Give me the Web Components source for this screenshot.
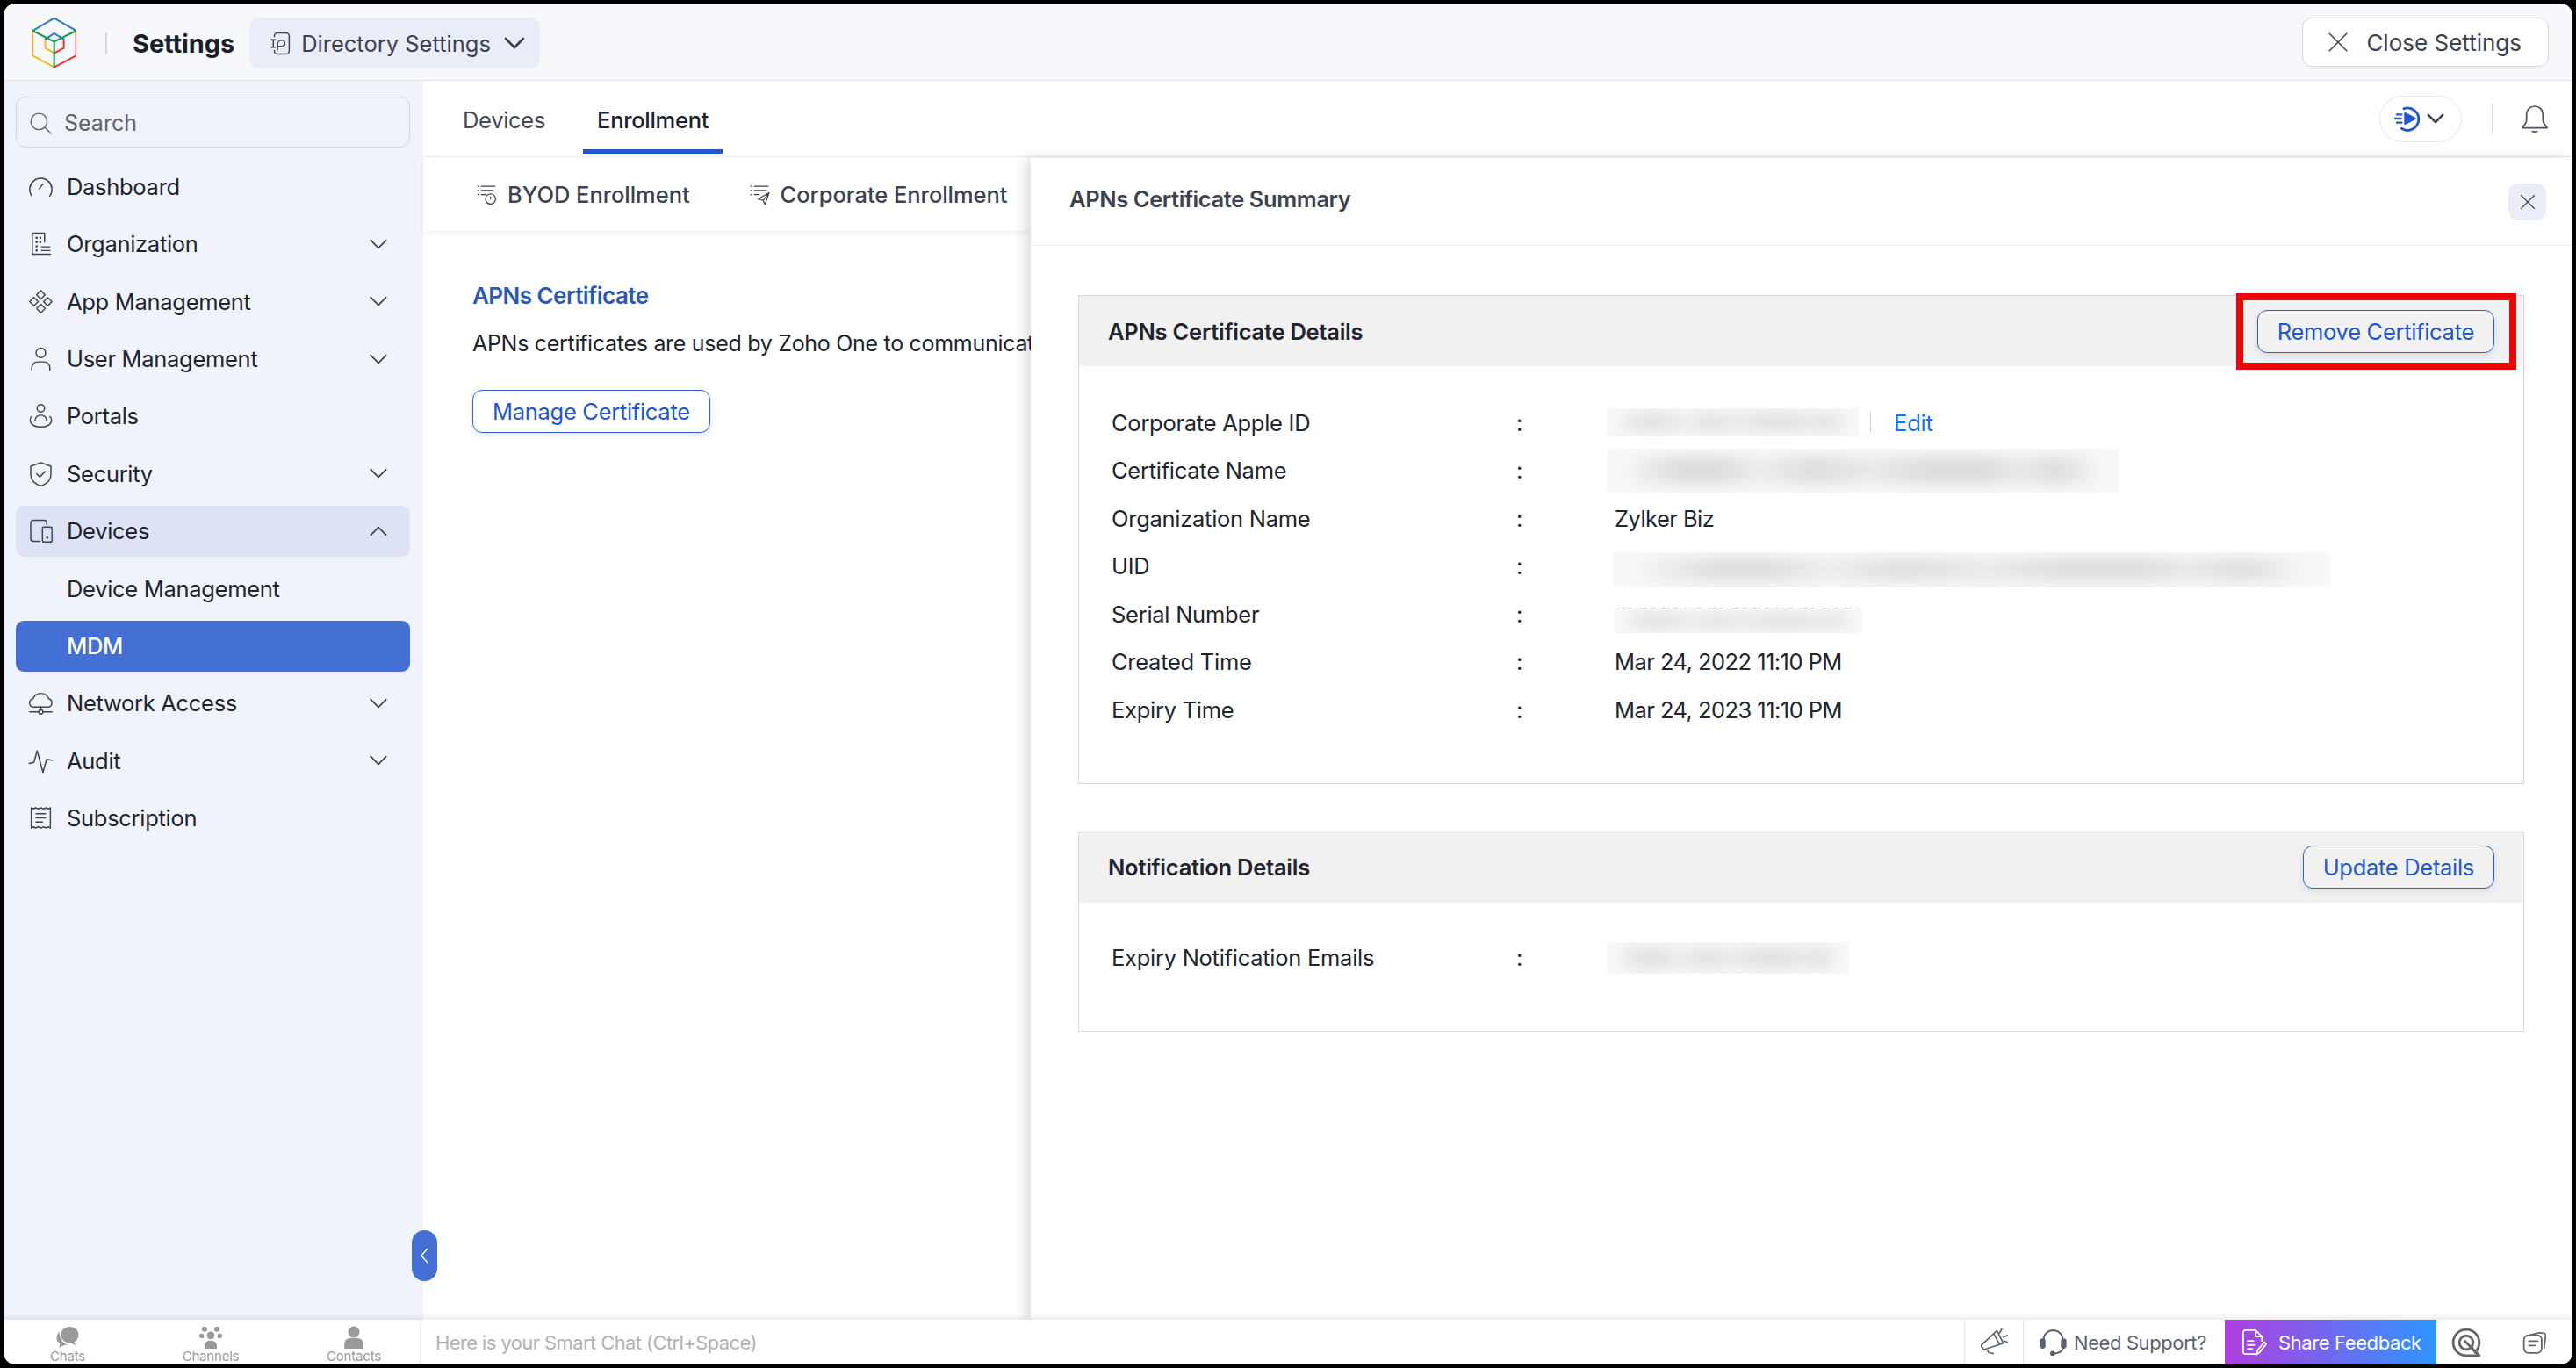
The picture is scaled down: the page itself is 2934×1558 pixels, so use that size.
<!DOCTYPE html>
<html>
<head>
<meta charset="utf-8">
<title>APNs Certificate Summary</title>
<style>
    html, body { margin: 0; height: 100%; background: #000; }
    body { padding: 4px; box-sizing: border-box; font-family: Inter, "Noto Sans", sans-serif; color: #20242e; }
</style>
</head>
<body>

<zs-app>
    <zs-topbar slot="top"></zs-topbar>
    <zs-sidebar slot="side">
        <zs-nav icon="dash">Dashboard</zs-nav>
        <zs-nav icon="org" arrow="down">Organization</zs-nav>
        <zs-nav icon="apps" arrow="down">App Management</zs-nav>
        <zs-nav icon="user" arrow="down">User Management</zs-nav>
        <zs-nav icon="portal">Portals</zs-nav>
        <zs-nav icon="shield" arrow="down">Security</zs-nav>
        <zs-nav icon="devices" arrow="up" state="open">Devices</zs-nav>
        <zs-nav>Device Management</zs-nav>
        <zs-nav state="active">MDM</zs-nav>
        <zs-nav icon="cloud" arrow="down">Network Access</zs-nav>
        <zs-nav icon="pulse" arrow="down">Audit</zs-nav>
        <zs-nav icon="receipt">Subscription</zs-nav>
    </zs-sidebar>
    <zs-main slot="main">
        <zs-panel>
            <zs-card heading="APNs Certificate Details">
                <zs-callout slot="action"><zs-btn>Remove Certificate</zs-btn></zs-callout>
                <zs-row label="Corporate Apple ID"><zs-blur w="287" h="32"></zs-blur><zs-edit></zs-edit></zs-row>
                <zs-row label="Certificate Name"><zs-blur w="583" h="50" tone="b"></zs-blur></zs-row>
                <zs-row label="Organization Name">Zylker Biz</zs-row>
                <zs-row label="UID"><zs-blur w="818" h="40" tone="b" shift="6" drop="4"></zs-blur></zs-row>
                <zs-row label="Serial Number"><zs-blur w="282" h="28" shift="8" drop="8" peek></zs-blur></zs-row>
                <zs-row label="Created Time">Mar 24, 2022 11:10 PM</zs-row>
                <zs-row label="Expiry Time">Mar 24, 2023 11:10 PM</zs-row>
            </zs-card>
            <zs-card heading="Notification Details" compact>
                <zs-btn slot="action">Update Details</zs-btn>
                <zs-row label="Expiry Notification Emails"><zs-blur w="275" h="36"></zs-blur></zs-row>
            </zs-card>
        </zs-panel>
    </zs-main>
    <zs-bottombar slot="bottom"></zs-bottombar>
</zs-app>

<script>
// every icon is drawn on a 24x24 box, stroke only unless the shape says otherwise
const ICONS = {
    chevdown: '<path d="M5 8.5l7 7 7-7"/>',
    chevup: '<path d="M5 15.5l7-7 7 7"/>',
    chevleft: '<path d="M15 3L7 12l8 9"/>',
    x: '<path d="M3 3l18 18M21 3L3 21"/>',
    search: '<circle cx="10.5" cy="10.5" r="8.5"/><path d="M16.8 16.8L23 23"/>',
    dash: '<path d="M3.6 21A10.5 10.5 0 1 1 20.4 21"/><path d="M10.5 14l3.5-4.5"/>',
    org: '<path d="M15.5 10.5V2H4v20h17"/><path d="M8 6.5h.01M11.5 6.5h.01M8 10.5h.01M11.5 10.5h.01M8 14.5h.01M8 18.5h.01" stroke-width="2.2"/><path d="M12.5 15h8M12.5 18.5h8"/>',
    apps: '<path d="M12 1.5l4 4-4 4-4-4zM12 14.5l4 4-4 4-4-4zM5.5 8l4 4-4 4-4-4zM18.5 8l4 4-4 4-4-4z"/>',
    user: '<circle cx="12" cy="6.5" r="4.5"/><path d="M3.5 23v-2.5a5.500 5.500 0 0 1 5.500-5.500h6a5.500 5.500 0 0 1 5.500 5.500V23"/>',
    portal: '<circle cx="12" cy="5" r="3.5"/><path d="M6.500 17v-.5a5 5 0 0 1 5-5h1a5 5 0 0 1 5 5v.5"/><path d="M3.500 13C.5 15 1 22.500 12 22.500S23.500 15 20.500 13"/>',
    shield: '<path d="M12 1.500l9.500 3.500v8c0 5-4 8.500-9.500 10.500C6.500 21.500 2.500 18 2.500 13V5z"/><path d="M8 12l3 3 5-5"/>',
    devices: '<path d="M17.500 6V4.500a2.500 2.500 0 0 0-2.500-2.500H5a2.500 2.500 0 0 0-2.500 2.500v15A2.500 2.500 0 0 0 5 22h6"/><rect x="13.500" y="8.500" width="9" height="14" rx="1.500"/><path d="M18 18.500h.01" stroke-width="2.200"/>',
    cloud: '<path d="M6 16h12.500a4 4 0 0 0 .8-7.900A7.800 7.800 0 0 0 4.700 8 4 4 0 0 0 6 16z"/><path d="M12 16v3M1.500 20.500h8M14.500 20.500h8"/><circle cx="12" cy="20.500" r="2"/>',
    pulse: '<path d="M1 14.500l4.500-1L8.500 2.500 14 23l3.500-12.500 5.500 1"/>',
    receipt: '<path d="M3 2.500l2 1 2-1 2.500 1 2.500-1 2.500 1 2.500-1 2 1 2-1v19l-2-1-2 1-2.500-1-2.500 1-2.500-1-2.500 1-2-1-2 1z"/><path d="M7.500 8h9M7.500 12h9M7.500 16h6"/>',
    book: '<path d="M7 5.500V5a3 3 0 0 1 3-3h8a3 3 0 0 1 3 3v14a3 3 0 0 1-3 3h-8a3 3 0 0 1-3-3v-.5"/><path d="M4 8.500h4M6 8.500v7M4 15.500h4"/><path d="M10 18v-5a4 4 0 0 1 4-4 3 3 0 0 1 3 3c0 2.500-3 3-7 2.500"/>',
    bell: '<path d="M12 1.500a7 7 0 0 0-7 7v5c0 3-2.500 4-3.500 6.500h21c-1-2.500-3.500-3.500-3.500-6.500v-5a7 7 0 0 0-7-7z"/><path d="M10 22.800q2 1.200 4 0"/>',
    feed: '<path d="M9 3.500A9.500 9.500 0 1 1 7 20.500" stroke-width="2.200"/><path d="M10 7.500l8.500 4.500-8.500 4.500z" fill="currentColor"/><path d="M3 8.500h4M1.500 12h5M3 15.500h4" stroke-width="1.800"/>',
    byod: '<path d="M3 3h.8M7 3h15M3 7.500h.8M7 7.500h13M3 12h.8M7 12h5"/><circle cx="17" cy="17" r="5.500"/><path d="M17 14.500V17"/>',
    corp: '<path d="M3 3h.8M7 3h15M3 7.500h.8M7 7.500h13M3 12h.8M7 12h5"/><path d="M23 10l-12 7 5.500 1.500 2 4.500zM23 10l-6.500 8.500"/>',
    horn: '<path d="M14.300 1.900L.8 14.500q-.5.8 0 1.600l1.600 2q.5.5 1.200.3L19.900 13z"/><path d="M11.500 4.600l5 9.300"/><path d="M6 19.500q1 2.500 5 2.500"/><path d="M18.600.4l-2 3.500M23.800 6l-3.900 1.500M23.400 12l-2.900-1"/>',
    headset: '<path d="M3.500 12V10a8.500 8.500 0 0 1 17 0v2"/><rect x="1" y="9.500" width="3.500" height="7.500" rx="1.700" fill="currentColor"/><rect x="19.500" y="9.500" width="3.500" height="7.500" rx="1.700" fill="currentColor"/><path d="M20.500 17c0 3-3 4.500-7 5"/><circle cx="11.500" cy="22" r="1.500" fill="currentColor"/>',
    note: '<path d="M14 1.500H5a2 2 0 0 0-2 2v17a2 2 0 0 0 2 2h10"/><path d="M14 1.500V7h5.500zM19.500 7v4"/><path d="M7 11h5M7 14.500h6M7 18h4"/><path d="M14.500 23l1-3.500 6-7.500 2 1.500-6 7.500z"/>',
    target: '<path d="M12 1.500a10.500 10.500 0 1 0 0 21h10.500l-6-6"/><path d="M22.500 12A10.500 10.500 0 0 0 12 1.500"/><path d="M22.500 12a10.500 10.500 0 0 1-3.500 7.800"/><circle cx="12" cy="12" r="5.500"/><path d="M11 11l7 7"/>',
    notes: '<path d="M5 5.500l12-3 .5 0 4 .5c1.500.3 2 1 2 2l-1.500 13"/><rect x="1.500" y="5" width="18" height="18" rx="4.500"/><path d="M6.500 11h9M6.500 15.500h6"/>',
    chat: '<path fill="currentColor" stroke="none" d="M14 1c5.500 0 9.500 3.500 9.500 8.500 0 3.500-2 6-4.500 7.500l2 4-5.500-3C9 18 5 14.500 5 9.500 5 4.500 9 1 14 1z"/><path fill="currentColor" stroke="none" d="M3.500 6C1.500 8 .5 10 .5 12.500c0 3 1.500 5 3.500 6.500L3 23l6-3c1.500.2 3 .2 4-.2C8 19 3 15 3.500 6z"/>',
    team: '<g fill="currentColor" stroke="none"><circle cx="12" cy="10" r="4"/><path d="M5.500 24v-3c0-3 2.500-5.500 6.500-5.500s6.500 2.500 6.500 5.500v3z"/><circle cx="5.500" cy="3.500" r="2.800"/><circle cx="18.500" cy="3.500" r="2.800"/><circle cx="2.500" cy="10.500" r="2.500"/><circle cx="21.500" cy="10.500" r="2.500"/></g>',
    person: '<g fill="currentColor" stroke="none"><circle cx="12" cy="6.500" r="6"/><path d="M2 24v-5c0-3.500 3-6 6-6h8c3 0 6 2.500 6 6v5z"/></g>'
};

function icon(name, size, width) {
    return `<svg width="${size}" height="${size}" viewBox="0 0 24 24" fill="none" stroke="currentColor"
        stroke-width="${width ?? 1.5}" stroke-linecap="round" stroke-linejoin="round"
        style="display:block;flex:none">${ICONS[name]}</svg>`;
}

// small base class so each element only has to hand over its markup
class ShadowElement extends HTMLElement {
    connectedCallback() {
        if (this.shadowRoot) return;
        this.attachShadow({mode: 'open'});
        this.shadowRoot.innerHTML = this.markup();
    }
}

class ZsApp extends ShadowElement {
    markup() {
        return `
        <style>
            :host {
                display: grid;
                grid-template: 88px minmax(0, 1fr) 51px / 478px minmax(0, 1fr);
                width: 2926px;
                height: 1550px;
                background: #fff;
                border-radius: 14px;
                overflow: hidden;
                font-size: 26px;
            }
            ::slotted([slot="top"]), ::slotted([slot="bottom"]) { grid-column: 1 / 3; }
        </style>
        <slot name="top"></slot>
        <slot name="side"></slot>
        <slot name="main"></slot>
        <slot name="bottom"></slot>`;
    }
}

class ZsTopbar extends ShadowElement {
    markup() {
        return `
        <style>
            :host {
                display: flex;
                align-items: center;
                box-sizing: border-box;
                height: 88px;
                padding: 3px 27px 0 33px;
                background: #f7f8fc;
                border-bottom: 1px solid #e2e3e7;
            }
            .logo { display: block; flex: none; }
            .rule { width: 2px; height: 25px; margin: 0 29px 0 33px; background: #d5d6da; }
            .name { font-size: 29px; font-weight: 700; color: #1b1f2b; letter-spacing: -.1px; }
            .picker {
                display: flex;
                align-items: center;
                height: 58px;
                box-sizing: border-box;
                width: 331px;
                margin-left: 17px;
                padding: 0 14px 0 20px;
                gap: 10px;
                background: #e9edf8;
                border-radius: 11px;
                color: #3c4250;
                font-size: 25.500px;
                white-space: nowrap;
            }
            .picker .chev { margin-left: auto; }
            .close {
                display: flex;
                align-items: center;
                gap: 19px;
                height: 56px;
                box-sizing: border-box;
                margin: 0 0 2px auto;
                padding: 0 30px 0 27px;
                background: #fff;
                border: 1px solid #d5d6da;
                border-radius: 11px;
                color: #3c4250;
                font-size: 26px;
                white-space: nowrap;
            }
        </style>
        <svg class="logo" width="50" height="58" viewBox="36 18 150 174" fill="none" stroke-width="6" stroke-linecap="round" stroke-linejoin="round">
            <path stroke="#f5b71e" d="M80 92v30l30 18M37 63v85l73 40"/>
            <path stroke="#e8312f" d="M143 92v30l-33 18M185 63v85l-75 40"/>
            <path stroke="#2a77c9" d="M80 92l30-20 33 20M37 63l73-43 75 43"/>
            <path stroke="#109c47" d="M37 63l73 37 75-37M110 100v88"/>
        </svg>
        <span class="rule"></span>
        <span class="name">Settings</span>
        <div class="picker">${icon('book', 29, 1.2)}<span>Directory Settings</span><span class="chev">${icon('chevdown', 34, 1.9)}</span></div>
        <div class="close">${icon('x', 26, 1.4)}<span>Close Settings</span></div>`;
    }
}

class ZsSidebar extends ShadowElement {
    markup() {
        return `
        <style>
            :host {
                display: flex;
                flex-direction: column;
                gap: 7.400px;
                box-sizing: border-box;
                padding: 18px 15px 0 14px;
                background: #f0f3fb;
            }
            .search {
                display: flex;
                align-items: center;
                gap: 14px;
                height: 58px;
                flex: none;
                box-sizing: border-box;
                margin-bottom: 8px;
                padding: 2px 14px 0;
                border: 1px solid #d3d6de;
                border-radius: 11px;
                color: #5d6472;
                font-size: 25px;
            }
        </style>
        <div class="search">${icon('search', 26, 1.3)}<span>Search</span></div>
        <slot></slot>`;
    }
}

class ZsNav extends ShadowElement {
    markup() {
        let name = this.getAttribute('icon');
        let arrow = this.getAttribute('arrow');
        return `
        <style>
            :host {
                display: flex;
                align-items: center;
                height: 58px;
                flex: none;
                box-sizing: border-box;
                padding: 0 21px 0 14px;
                border-radius: 9px;
                color: #20242e;
                font-size: 25.500px;
                letter-spacing: -.3px;
            }
            :host([state="open"]) { background: #dde3f4; }
            :host([state="active"]) { background: #4470d3; color: #fff; font-weight: 500; }
            .ico { width: 30px; margin-right: 14px; flex: none; color: #3d4350; }
            .arrow { margin-left: auto; color: #3d4350; }
        </style>
        <span class="ico">${name ? icon(name, 29, 1.2) : ''}</span>
        <slot></slot>
        ${arrow ? `<span class="arrow">${icon(arrow === 'up' ? 'chevup' : 'chevdown', 30, 1.4)}</span>` : ''}`;
    }
}

class ZsBtn extends ShadowElement {
    markup() {
        return `
        <style>
            :host {
                display: inline-flex;
                align-items: center;
                justify-content: center;
                box-sizing: border-box;
                height: 49px;
                padding: 0 22px;
                background: transparent;
                border: 1.500px solid #2e62cf;
                border-radius: 11px;
                box-shadow: 0 3px 7px rgba(40, 60, 110, .12);
                color: #2257cc;
                font-size: 25.500px;
                font-weight: 400;
                letter-spacing: -.3px;
                white-space: nowrap;
            }
        </style>
        <slot></slot>`;
    }
}

// red annotation frame drawn over whatever it wraps
class ZsCallout extends ShadowElement {
    markup() {
        return `
        <style>
            :host { display: inline-flex; position: relative; }
            .mark {
                position: absolute;
                inset: -19px -25px -19px -24px;
                border: 8px solid #e80808;
                pointer-events: none;
            }
        </style>
        <slot></slot>
        <span class="mark"></span>`;
    }
}

class ZsMain extends ShadowElement {
    markup() {
        return `
        <style>
            :host {
                display: flex;
                flex-direction: column;
                position: relative;
                min-width: 0;
                background: #fff;
            }
            .tabs {
                display: flex;
                align-items: flex-start;
                flex: none;
                height: 87px;
                box-sizing: border-box;
                padding-left: 29px;
                gap: 27px;
                border-bottom: 1px solid #eceded;
            }
            .tab {
                display: flex;
                align-items: center;
                height: 83px;
                box-sizing: border-box;
                padding: 10px 16px 0;
                border-bottom: 5px solid transparent;
                color: #434956;
                font-size: 25.500px;
                letter-spacing: -.3px;
            }
            .tab.on { color: #1b1f2b; font-weight: 500; border-bottom-color: #2257cc; }
            .tools { display: flex; align-items: center; margin-left: auto; height: 86px; padding-right: 27px; }
            .play {
                display: flex;
                align-items: center;
                justify-content: center;
                gap: 2px;
                width: 94px;
                height: 53px;
                box-sizing: border-box;
                border: 1px solid #e3e4e8;
                border-radius: 27px;
                color: #2257cc;
            }
            .play .chev { color: #3d4350; }
            .rule { width: 1px; height: 35px; margin: 0 32px 0 34px; background: #d5d6da; }
            .bell { color: #4b515e; }
            .subtabs {
                display: flex;
                align-items: center;
                flex: none;
                height: 84px;
                box-sizing: border-box;
                padding-left: 59px;
                gap: 66px;
                box-shadow: 0 2px 6px rgba(30, 40, 70, .07);
                color: #3c4250;
                font-size: 25.500px;
                font-weight: 500;
                letter-spacing: -.05px;
            }
            .subtab { display: flex; align-items: center; gap: 12px; white-space: nowrap; }
            .body { padding: 58px 0 0 56px; white-space: nowrap; }
            h2 { margin: 0; font-size: 26px; line-height: 32px; font-weight: 600; letter-spacing: -.55px; color: #2a57b8; }
            p { margin: 20px 0 35px; font-size: 25px; line-height: 36px; letter-spacing: -.3px; color: #20242e; }
            .fold {
                position: absolute;
                left: -13px;
                bottom: 44px;
                display: flex;
                align-items: center;
                justify-content: center;
                width: 29px;
                height: 58px;
                background: #4470d3;
                border-radius: 15px;
                color: #fff;
            }
        </style>
        <div class="tabs">
            <div class="tab">Devices</div>
            <div class="tab on">Enrollment</div>
            <div class="tools">
                <div class="play">${icon('feed', 32, 1.6)}<span class="chev">${icon('chevdown', 28, 2.2)}</span></div>
                <span class="rule"></span>
                <span class="bell">${icon('bell', 32, 1.3)}</span>
            </div>
        </div>
        <div class="subtabs">
            <div class="subtab">${icon('byod', 25, 1.2)}BYOD Enrollment</div>
            <div class="subtab">${icon('corp', 25, 1.2)}Corporate Enrollment</div>
        </div>
        <div class="body">
            <h2>APNs Certificate</h2>
            <p>APNs certificates are used by Zoho One to communicate</p>
            <zs-btn>Manage Certificate</zs-btn>
        </div>
        <slot></slot>
        <div class="fold">${icon('chevleft', 20, 1.7)}</div>`;
    }
}

class ZsPanel extends ShadowElement {
    markup() {
        return `
        <style>
            :host {
                position: absolute;
                top: 88px;
                left: 692px;
                right: 0;
                bottom: 0;
                display: flex;
                flex-direction: column;
                background: #fff;
                box-shadow: -7px 0 12px rgba(30, 35, 55, .14);
            }
            header {
                display: flex;
                align-items: center;
                justify-content: space-between;
                flex: none;
                height: 100px;
                box-sizing: border-box;
                padding: 0 30px 6px 44px;
                border-bottom: 1px solid #ececec;
                color: #3c4250;
                font-size: 25.500px;
                font-weight: 600;
                letter-spacing: -.4px;
            }
            .x {
                display: flex;
                align-items: center;
                justify-content: center;
                width: 43px;
                height: 42px;
                margin-top: 6px;
                background: #e9edf8;
                border-radius: 11px;
                color: #3c4250;
            }
            .cards {
                display: flex;
                flex-direction: column;
                gap: 54px;
                padding: 56px 55px 0 54px;
            }
        </style>
        <header><span>APNs Certificate Summary</span><span class="x">${icon('x', 20, 1.4)}</span></header>
        <div class="cards"><slot></slot></div>`;
    }
}

class ZsCard extends ShadowElement {
    markup() {
        return `
        <style>
            :host {
                display: block;
                border: 1px solid #d9d9d9;
            }
            .head {
                display: flex;
                align-items: center;
                justify-content: space-between;
                height: 80px;
                box-sizing: border-box;
                padding: 0 33px;
                background: #f1f1f1;
                color: #20242e;
                font-size: 25.500px;
                font-weight: 600;
                letter-spacing: -.25px;
            }
            .rows { padding: 37px 0 56px 19px; }
            :host([compact]) .rows { padding: 36px 0 56px 19px; }
        </style>
        <div class="head"><span>${this.getAttribute('heading')}</span><slot name="action"></slot></div>
        <div class="rows"><slot></slot></div>`;
    }
}

class ZsRow extends ShadowElement {
    markup() {
        return `
        <style>
            :host {
                display: grid;
                grid-template-columns: 461px 112px minmax(0, 1fr);
                align-items: center;
                height: 54.500px;
                padding-left: 18px;
                font-size: 25.500px;
                letter-spacing: -.27px;
                color: #20242e;
                white-space: nowrap;
            }
            .value { display: flex; align-items: center; letter-spacing: -.55px; }
        </style>
        <span>${this.getAttribute('label')}</span>
        <span>:</span>
        <span class="value"><slot></slot></span>`;
    }
}

// the values the screenshot has blurred out: soft grey smudges on a pale block
class ZsBlur extends ShadowElement {
    markup() {
        let w = this.getAttribute('w');
        let h = this.getAttribute('h');
        let shift = Number(this.getAttribute('shift') ?? 0);
        let drop = Number(this.getAttribute('drop') ?? 0);
        let dark = this.getAttribute('tone') === 'b' ? '#dcdcdc' : '#dfdfdf';
        return `
        <style>
            :host {
                display: block;
                flex: none;
                position: relative;
                width: ${w}px;
                height: ${h}px;
                margin: ${drop * 2}px 0 0 ${shift - 8}px;
                background: #f8f8f8;
            }
            .clip { height: 100%; overflow: hidden; }
            .smudge {
                height: 100%;
                filter: blur(8px);
                background: linear-gradient(90deg, transparent 0 3%, #e9e9e9 8%, ${dark} 14% 22%, #ededed 30%, ${dark} 40%, #e9e9e9 52%, ${dark} 62% 74%, #e8e8e8 80%, ${dark} 88%, transparent 97%) center / 100% 62% no-repeat;
            }
            .peek {
                display: ${this.hasAttribute('peek') ? 'block' : 'none'};
                position: absolute;
                top: -1.500px;
                left: 2px;
                right: 6px;
                height: 1.500px;
                background: repeating-linear-gradient(90deg, #aaa 0 9px, transparent 9px 13px, #c4c4c4 13px 18px, transparent 18px 26px);
            }
        </style>
        <div class="peek"></div>
        <div class="clip"><div class="smudge"></div></div>`;
    }
}

class ZsEdit extends ShadowElement {
    markup() {
        return `
        <style>
            :host { display: flex; align-items: center; margin-left: 12px; color: #1a73e8; font-size: 25.500px; letter-spacing: -.2px; }
            .rule { width: 1px; height: 24px; margin-right: 26px; background: #cfd2d8; }
        </style>
        <span class="rule"></span><span>Edit</span>`;
    }
}

class ZsBottombar extends ShadowElement {
    markup() {
        return `
        <style>
            :host {
                display: flex;
                align-items: stretch;
                position: relative;
                background: #fff;
                box-shadow: 0 -3px 6px rgba(40, 40, 50, .1);
                color: #5c6370;
            }
            .apps {
                display: flex;
                gap: 17px;
                width: 474px;
                flex: none;
                border-right: 2px solid #ebebeb;
            }
            .app {
                display: flex;
                flex-direction: column;
                align-items: center;
                width: 146px;
                padding-top: 7px;
                box-sizing: border-box;
                color: #9a9a9a;
                font-size: 15px;
                letter-spacing: -.2px;
                line-height: 18px;
            }
            .smart { flex: 1; align-self: center; padding-left: 16px; color: #b2b2b2; font-size: 22px; letter-spacing: -.6px; white-space: nowrap; }
            .cell { display: flex; align-items: center; justify-content: center; border-left: 1px solid #e6e6e6; }
            .horn { width: 66px; }
            .support { width: 230px; box-sizing: border-box; justify-content: flex-start; padding-left: 18px; gap: 8px; font-size: 22px; letter-spacing: -.4px; white-space: nowrap; }
            .share {
                display: flex;
                align-items: center;
                width: 241px;
                box-sizing: border-box;
                padding-left: 17px;
                gap: 13px;
                color: #fff;
                font-size: 22px;
                letter-spacing: -.4px;
                white-space: nowrap;
                background: linear-gradient(90deg, #b03de0, #2e96ff);
            }
            .end { display: flex; align-items: center; gap: 47px; padding: 0 30px 0 17px; color: #666; }
        </style>
        <div class="apps">
            <div class="app">${icon('chat', 26)}Chats</div>
            <div class="app">${icon('team', 26)}Channels</div>
            <div class="app">${icon('person', 26)}Contacts</div>
        </div>
        <div class="smart">Here is your Smart Chat (Ctrl+Space)</div>
        <div class="cell horn">${icon('horn', 31, 1.3)}</div>
        <div class="cell support">${icon('headset', 31, 1.5)}<span>Need Support?</span></div>
        <div class="share">${icon('note', 31, 1.4)}<span>Share Feedback</span></div>
        <div class="end">${icon('target', 34, 2)}${icon('notes', 27, 1.6)}</div>`;
    }
}

customElements.define('zs-app', ZsApp);
customElements.define('zs-topbar', ZsTopbar);
customElements.define('zs-sidebar', ZsSidebar);
customElements.define('zs-nav', ZsNav);
customElements.define('zs-btn', ZsBtn);
customElements.define('zs-callout', ZsCallout);
customElements.define('zs-main', ZsMain);
customElements.define('zs-panel', ZsPanel);
customElements.define('zs-card', ZsCard);
customElements.define('zs-row', ZsRow);
customElements.define('zs-blur', ZsBlur);
customElements.define('zs-edit', ZsEdit);
customElements.define('zs-bottombar', ZsBottombar);
</script>
</body>
</html>
